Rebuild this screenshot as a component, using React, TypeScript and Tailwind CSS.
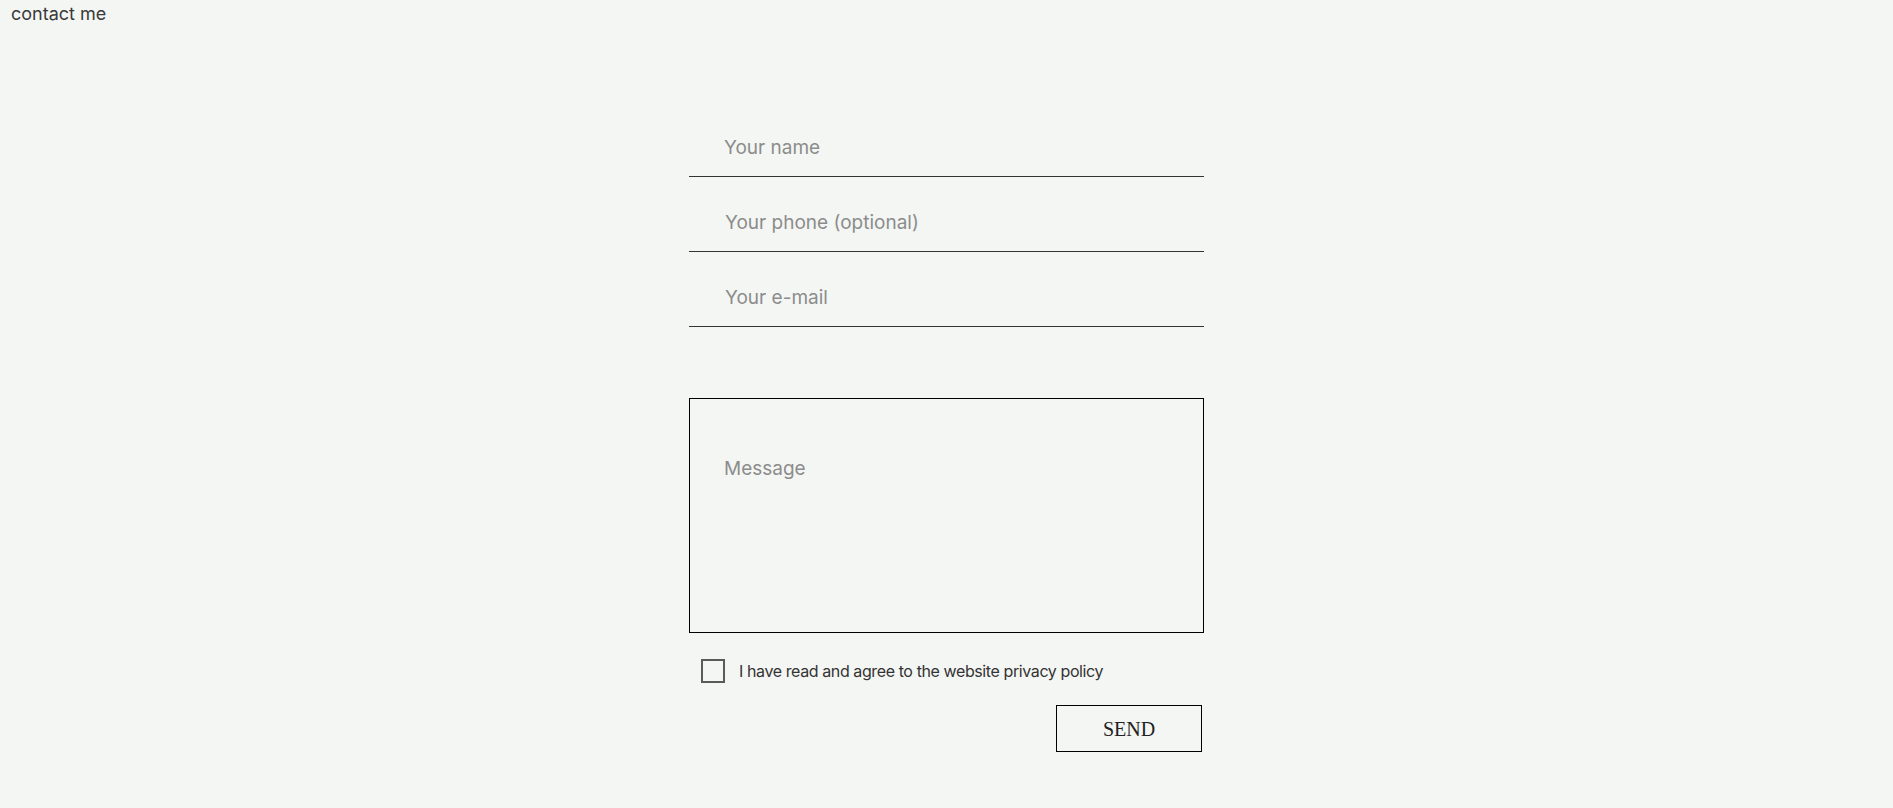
import React from "react";

export default function App() {
  return (
    <div className="min-h-[808px] w-full bg-[#f4f6f3] text-[#333]" style={{ fontFamily: "Inter, 'Noto Sans', sans-serif" }}>
      <div className="pl-[11px] pt-[2px] text-[18px] leading-[24px] text-[#3a3a3a]">contact me</div>
      <div className="flex justify-center pt-[76px]">
        <form className="flex w-[515px] flex-col" onSubmit={(e) => e.preventDefault()}>
          <input
            placeholder="Your name"
            className="h-[75px] w-full border-b border-[#333] bg-transparent pl-[35px] pt-[17px] text-[19px] outline-none placeholder:text-[#8c8c8c]"
          />
          <input
            placeholder="Your phone (optional)"
            className="h-[75px] w-full border-b border-[#333] bg-transparent pl-[36px] pt-[17px] text-[19px] outline-none placeholder:text-[#8c8c8c]"
          />
          <input
            placeholder="Your e-mail"
            className="h-[75px] w-full border-b border-[#333] bg-transparent pl-[36px] pt-[17px] text-[19px] outline-none placeholder:text-[#8c8c8c]"
          />
          <textarea
            placeholder="Message"
            className="mt-[71px] h-[235px] w-full resize-none border-[1.5px] border-black bg-transparent pl-[34px] pt-[56px] text-[19px] leading-[28px] outline-none placeholder:text-[#8c8c8c]"
          />
          <label className="mt-[26px] flex items-center pl-[12px]">
            <span className="h-[24px] w-[24px] shrink-0 border-2 border-[#5a5a5a]" />
            <span className="ml-[14px] text-[16px] leading-[24px] tracking-[-0.4px] text-[#333]">
              I have read and agree to the website privacy policy
            </span>
          </label>
          <div className="mt-[22px] flex justify-end pr-[2px]">
            <button
              type="submit"
              className="h-[47px] w-[146px] border-[1.5px] border-black bg-transparent text-[20px] text-[#222]"
              style={{ fontFamily: "'Liberation Serif', 'DejaVu Serif', serif" }}
            >
              SEND
            </button>
          </div>
        </form>
      </div>
    </div>
  );
}
